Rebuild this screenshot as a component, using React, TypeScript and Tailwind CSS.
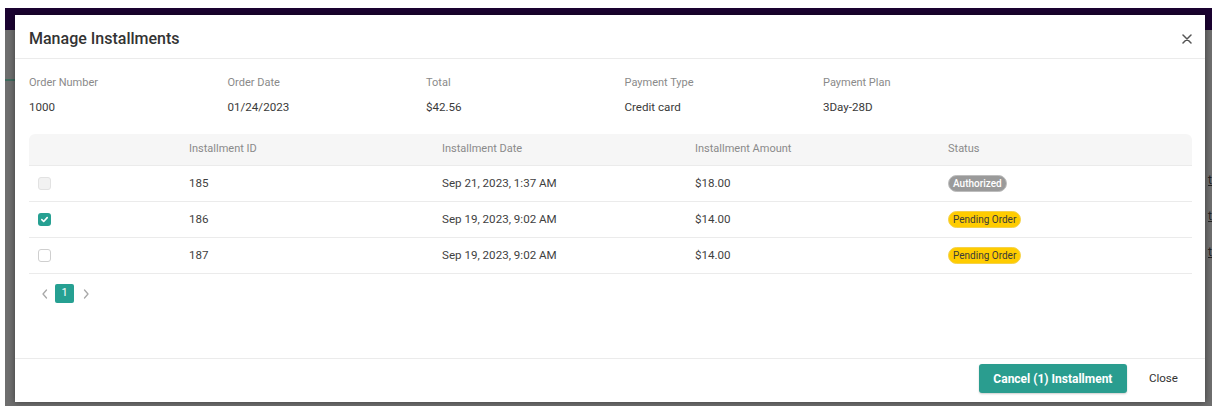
import React from "react";

const font = { fontFamily: "Roboto, 'Noto Sans', Arial, sans-serif" };

type Row = {
  id: string;
  date: string;
  amount: string;
  status: "Authorized" | "Pending Order";
  box: "disabled" | "checked" | "empty";
};

const rows: Row[] = [
  { id: "185", date: "Sep 21, 2023, 1:37 AM", amount: "$18.00", status: "Authorized", box: "disabled" },
  { id: "186", date: "Sep 19, 2023, 9:02 AM", amount: "$14.00", status: "Pending Order", box: "checked" },
  { id: "187", date: "Sep 19, 2023, 9:02 AM", amount: "$14.00", status: "Pending Order", box: "empty" },
];

const info = [
  { label: "Order Number", value: "1000" },
  { label: "Order Date", value: "01/24/2023" },
  { label: "Total", value: "$42.56" },
  { label: "Payment Type", value: "Credit card" },
  { label: "Payment Plan", value: "3Day-28D" },
];

function CheckBox({ kind }: { kind: Row["box"] }) {
  if (kind === "checked") {
    return (
      <span className="flex h-[13px] w-[13px] items-center justify-center rounded-[3px] bg-[#26a092]">
        <svg width="9" height="9" viewBox="0 0 10 10" fill="none">
          <path d="M2 5.2 4.1 7.2 8 2.9" stroke="#fff" strokeWidth="1.8" strokeLinecap="round" strokeLinejoin="round" />
        </svg>
      </span>
    );
  }
  if (kind === "disabled") {
    return <span className="block h-[13px] w-[13px] rounded-[3px] border border-[#e2e2e2] bg-[#f2f2f2]" />;
  }
  return <span className="block h-[13px] w-[13px] rounded-[3px] border border-[#cfcfcf] bg-white" />;
}

function Badge({ status }: { status: Row["status"] }) {
  if (status === "Authorized") {
    return (
      <span className="inline-flex h-[17px] items-center rounded-full border border-[#bdbdbd] bg-[#9a9a9a] px-[4px] text-[10px] font-medium leading-none text-white">
        Authorized
      </span>
    );
  }
  return (
    <span className="inline-flex h-[17px] items-center rounded-full border border-[#f5d24a] bg-[#ffcc00] px-[4px] text-[10px] leading-none text-[#3a3a3a]">
      Pending Order
    </span>
  );
}

export default function App() {
  return (
    <div className="relative h-[406px] w-[1212px] overflow-hidden bg-white" style={font}>
      {/* page behind the dialog, dimmed by the backdrop */}
      <div className="flex h-full flex-col pl-[5px] pt-[8px]">
        <div className="h-[22px] bg-[#1b0331]" />
        <div className="flex flex-1 flex-col bg-[#6e6e6e]">
          <div className="ml-0 mt-[49px] h-[2px] w-[10px] bg-[#3f6b5e]" />
          <div className="flex flex-col items-end gap-[22px] pt-[92px]">
            <span className="text-[12px] leading-[14px] text-[#222] underline">t</span>
            <span className="text-[12px] leading-[14px] text-[#222] underline">t</span>
            <span className="text-[12px] leading-[14px] text-[#222] underline">t</span>
          </div>
        </div>
      </div>

      {/* dialog */}
      <div className="absolute left-[15px] top-[15px] flex h-[387px] w-[1190px] flex-col bg-white shadow-[0_0_6px_rgba(0,0,0,0.45)]">
        <div className="flex h-[44px] items-center justify-between border-b border-[#ebebeb] pl-[14px] pr-[12px] pt-[5px]">
          <h2 className="text-[16px] font-medium text-[#333]">Manage Installments</h2>
          <svg width="10" height="10" viewBox="0 0 10 10" className="mr-[1px]">
            <path d="M1 1 9 9M9 1 1 9" stroke="#555" strokeWidth="1.5" strokeLinecap="round" />
          </svg>
        </div>

        <div className="flex flex-1 flex-col px-[14px] pt-[16px]">
          <div className="flex">
            {info.map((f) => (
              <div key={f.label} className="flex w-[198.5px] flex-col gap-[8px]">
                <span className="text-[11px] leading-[16px] text-[#8a8a8a]">{f.label}</span>
                <span className="text-[11.6px] leading-[16px] text-[#3a3a3a]">{f.value}</span>
              </div>
            ))}
          </div>

          <div className="mt-[19px] w-[1163px]">
            <div className="grid h-[31px] grid-cols-[152px_253px_253px_253px_1fr] items-center rounded-t-[6px] bg-[#f6f6f6] text-[11px] text-[#8a8a8a]">
              <span />
              <span className="pl-[8px]">Installment ID</span>
              <span className="pl-[8px]">Installment Date</span>
              <span className="pl-[8px]">Installment Amount</span>
              <span className="pl-[8px]">Status</span>
            </div>
            {rows.map((r) => (
              <div
                key={r.id}
                className="grid h-[36px] grid-cols-[152px_253px_253px_253px_1fr] items-center border-t border-[#ebebeb] text-[11.6px] text-[#3f3f3f]"
              >
                <span className="pl-[9px]">
                  <CheckBox kind={r.box} />
                </span>
                <span className="pl-[8px]">{r.id}</span>
                <span className="pl-[8px]">{r.date}</span>
                <span className="pl-[8px]">{r.amount}</span>
                <span className="pl-[8px]">
                  <Badge status={r.status} />
                </span>
              </div>
            ))}
            <div className="border-t border-[#ebebeb]" />
          </div>

          <div className="mt-[10px] flex items-center gap-[3px] pl-[11px]">
            <svg width="10" height="12" viewBox="0 0 10 12" className="mr-[2px]">
              <path d="M6.5 2 3 6l3.5 4" stroke="#a8a8a8" strokeWidth="1.3" fill="none" strokeLinecap="round" strokeLinejoin="round" />
            </svg>
            <span className="flex h-[19px] w-[19px] items-center justify-center rounded-[2px] bg-[#26a092] text-[11px] text-white">
              1
            </span>
            <svg width="10" height="12" viewBox="0 0 10 12" className="ml-[4px]">
              <path d="M3.5 2 7 6l-3.5 4" stroke="#a8a8a8" strokeWidth="1.3" fill="none" strokeLinecap="round" strokeLinejoin="round" />
            </svg>
          </div>
        </div>

        <div className="flex h-[44px] items-start justify-end border-t border-[#ebebeb] pr-[27px] pt-[5px]">
          <button className="h-[29px] w-[148px] rounded-[3px] bg-[#2a9d8f] text-[12px] font-bold text-white shadow-[0_1px_2px_rgba(0,0,0,0.2)]">
            Cancel (1) Installment
          </button>
          <button className="ml-[22px] h-[29px] text-[11.6px] text-[#333]">Close</button>
        </div>
      </div>
    </div>
  );
}
